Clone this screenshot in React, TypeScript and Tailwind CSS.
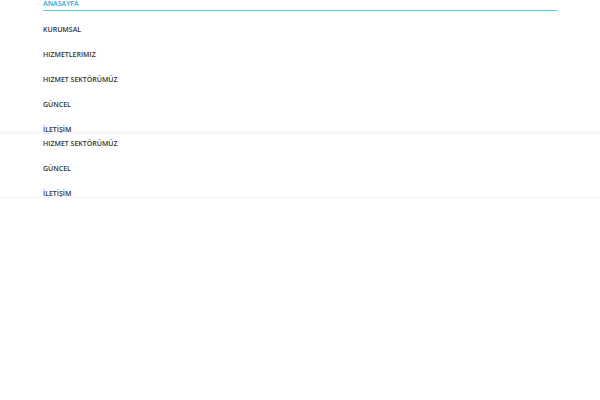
import React from "react";

const font = { fontFamily: '"Open Sans", "Liberation Sans", sans-serif' };

export default function App() {
  const top = ["KURUMSAL", "HIZMETLERIMIZ", "HIZMET SEKTÖRÜMÜZ", "GÜNCEL", "İLETİŞİM"];
  const bottom = ["HIZMET SEKTÖRÜMÜZ", "GÜNCEL", "İLETİŞİM"];
  return (
    <div className="w-[600px] h-[400px] bg-white overflow-hidden" style={font}>
      <div className="relative z-0 px-[43px]">
        <div className="h-[11px] flex items-end border-b border-[#55c8d2]">
          <span className="text-[7px] font-semibold text-[#2fa3d6] leading-[8px] pb-[2px]">ANASAYFA</span>
        </div>
        <div className="mt-[6px]">
          {top.map((t) => (
            <div key={t} className="h-[25px] flex items-center text-[7px] font-semibold text-[#333333] leading-none">
              {t}
            </div>
          ))}
        </div>
      </div>
      <div className="relative z-10 -mt-[9px] h-[65px] overflow-hidden bg-white border-t border-b border-[#f2f2f2] shadow-[0_-2px_3px_rgba(0,0,0,0.03)]">
        <div className="px-[43px] -mt-[3px]">
          {bottom.map((t, i) => (
            <div key={i} className="h-[25px] flex items-center text-[7px] font-semibold text-[#333333] leading-none">
              {t}
            </div>
          ))}
        </div>
      </div>
    </div>
  );
}
